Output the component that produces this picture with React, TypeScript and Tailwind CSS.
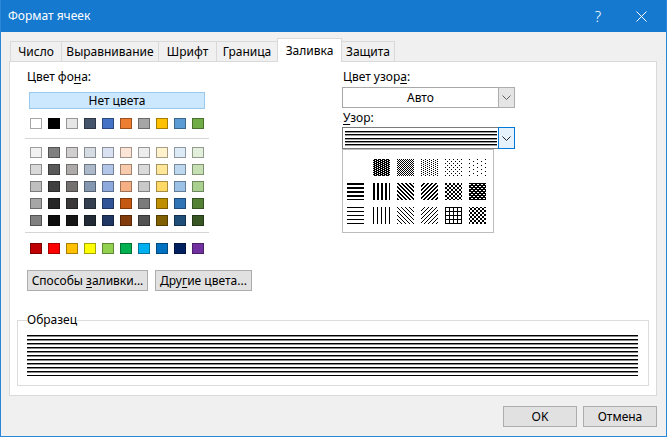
import React from "react";

const theme = [
  "bg-[#FFFFFF]", "bg-[#000000]", "bg-[#E7E6E6]", "bg-[#44546A]", "bg-[#4472C4]",
  "bg-[#ED7D31]", "bg-[#A5A5A5]", "bg-[#FFC000]", "bg-[#5B9BD5]", "bg-[#70AD47]",
];

const tints = [
  ["bg-[#F2F2F2]", "bg-[#7F7F7F]", "bg-[#D0CECE]", "bg-[#D6DCE4]", "bg-[#D9E1F2]", "bg-[#FCE4D6]", "bg-[#EDEDED]", "bg-[#FFF2CC]", "bg-[#DDEBF7]", "bg-[#E2EFDA]"],
  ["bg-[#D9D9D9]", "bg-[#595959]", "bg-[#AEAAAA]", "bg-[#ACB9CA]", "bg-[#B4C6E7]", "bg-[#F8CBAD]", "bg-[#DBDBDB]", "bg-[#FFE699]", "bg-[#BDD7EE]", "bg-[#C6E0B4]"],
  ["bg-[#BFBFBF]", "bg-[#404040]", "bg-[#757171]", "bg-[#8497B0]", "bg-[#8EA9DB]", "bg-[#F4B084]", "bg-[#C9C9C9]", "bg-[#FFD966]", "bg-[#9BC2E6]", "bg-[#A9D08E]"],
  ["bg-[#A6A6A6]", "bg-[#262626]", "bg-[#3A3838]", "bg-[#333F4F]", "bg-[#305496]", "bg-[#C65911]", "bg-[#7B7B7B]", "bg-[#BF8F00]", "bg-[#2F75B5]", "bg-[#548235]"],
  ["bg-[#808080]", "bg-[#0D0D0D]", "bg-[#171616]", "bg-[#222B35]", "bg-[#203764]", "bg-[#833C0C]", "bg-[#525252]", "bg-[#806000]", "bg-[#1F4E78]", "bg-[#375623]"],
];

const standard = [
  "bg-[#C00000]", "bg-[#FF0000]", "bg-[#FFC000]", "bg-[#FFFF00]", "bg-[#92D050]",
  "bg-[#00B050]", "bg-[#00B0F0]", "bg-[#0070C0]", "bg-[#002060]", "bg-[#7030A0]",
];

function SwatchRow({ colors, className = "" }: { colors: string[]; className?: string }) {
  return (
    <div className={`flex gap-[6px] ${className}`}>
      {colors.map((c, i) => (
        <div key={i} className={`w-[12px] h-[11px] border border-black/35 ${c}`} />
      ))}
    </div>
  );
}

type Pat = { w: number; h: number; bg: string; fg: string; r: number[][] } | null;
const B = "#000";
const W = "#fff";
const pats: Pat[] = [
  null,
  { w: 4, h: 2, bg: B, fg: W, r: [[0, 0, 1, 1], [2, 1, 1, 1]] },
  { w: 2, h: 2, bg: W, fg: B, r: [[0, 0, 1, 1], [1, 1, 1, 1]] },
  { w: 4, h: 2, bg: W, fg: B, r: [[0, 0, 1, 1], [2, 1, 1, 1]] },
  { w: 4, h: 4, bg: W, fg: B, r: [[0, 0, 1, 1], [2, 2, 1, 1]] },
  { w: 8, h: 4, bg: W, fg: B, r: [[0, 0, 1, 1], [4, 2, 1, 1]] },
  { w: 1, h: 4, bg: W, fg: B, r: [[0, 0, 1, 2]] },
  { w: 4, h: 1, bg: W, fg: B, r: [[0, 0, 2, 1]] },
  { w: 4, h: 4, bg: W, fg: B, r: [[0, 0, 2, 1], [1, 1, 2, 1], [2, 2, 2, 1], [3, 3, 1, 1], [0, 3, 1, 1]] },
  { w: 4, h: 4, bg: W, fg: B, r: [[2, 0, 2, 1], [1, 1, 2, 1], [0, 2, 2, 1], [3, 3, 1, 1], [0, 3, 1, 1]] },
  { w: 4, h: 4, bg: W, fg: B, r: [[0, 0, 2, 2], [2, 2, 2, 2]] },
  { w: 4, h: 4, bg: B, fg: W, r: [[0, 1, 2, 1], [2, 3, 2, 1]] },
  { w: 1, h: 4, bg: W, fg: B, r: [[0, 0, 1, 1]] },
  { w: 4, h: 1, bg: W, fg: B, r: [[0, 0, 1, 1]] },
  { w: 4, h: 4, bg: W, fg: B, r: [[0, 0, 1, 1], [1, 1, 1, 1], [2, 2, 1, 1], [3, 3, 1, 1]] },
  { w: 4, h: 4, bg: W, fg: B, r: [[3, 0, 1, 1], [2, 1, 1, 1], [1, 2, 1, 1], [0, 3, 1, 1]] },
  { w: 4, h: 4, bg: W, fg: B, r: [[0, 0, 4, 1], [0, 0, 1, 4]] },
  { w: 4, h: 4, bg: W, fg: B, r: [[0, 0, 1, 1], [1, 1, 1, 1], [2, 2, 1, 1], [3, 3, 1, 1], [3, 0, 1, 1], [2, 1, 1, 1], [1, 2, 1, 1], [0, 3, 1, 1]] },
];

function PatternCell({ p, id }: { p: Pat; id: string }) {
  if (!p) return <div className="w-[17px] h-[17px]" />;
  return (
    <svg width="17" height="17" shapeRendering="crispEdges" className="block">
      <defs>
        <pattern id={id} width={p.w} height={p.h} patternUnits="userSpaceOnUse">
          <rect width={p.w} height={p.h} fill={p.bg} />
          {p.r.map((r, i) => (
            <rect key={i} x={r[0]} y={r[1]} width={r[2]} height={r[3]} fill={p.fg} />
          ))}
        </pattern>
      </defs>
      <rect width="17" height="17" fill={`url(#${id})`} />
    </svg>
  );
}

function Chevron({ color = "#444" }: { color?: string }) {
  return (
    <svg width="9" height="5" viewBox="0 0 9 5" className="block">
      <path d="M0.5 0.5 L4.5 4.5 L8.5 0.5" fill="none" stroke={color} strokeWidth="1" />
    </svg>
  );
}

const tabs: { label: string; w: string; active?: boolean }[] = [
  { label: "Число", w: "w-[52px]" },
  { label: "Выравнивание", w: "w-[98px]" },
  { label: "Шрифт", w: "w-[59px]" },
  { label: "Граница", w: "w-[62px]" },
  { label: "Заливка", w: "w-[65px]", active: true },
  { label: "Защита", w: "w-[54px]" },
];

export default function App() {
  return (
    <div className="w-[667px] h-[437px] flex flex-col bg-[#f0f0f0] border-x border-b border-[#2a86d9] font-['Noto_Sans',sans-serif] text-[12px] leading-[16px] text-black overflow-hidden">
      {/* Title bar */}
      <div className="h-[32px] shrink-0 flex items-center bg-[#1479cf] text-white pl-[7px] pr-[19px]">
        <span>Формат ячеек</span>
        <span className="ml-auto w-[20px] text-center text-[15px] font-light">?</span>
        <span className="ml-[28px]">
          <svg width="11" height="11" viewBox="0 0 11 11" className="block">
            <path d="M0.5 0.5 L10.5 10.5 M10.5 0.5 L0.5 10.5" stroke="white" strokeWidth="1" />
          </svg>
        </span>
      </div>

      <div className="flex-1 flex flex-col pl-[8px] pr-[9px]">
        {/* Tabs */}
        <div className="h-[23px] mt-[6px] flex items-end pl-[1px]">
          {tabs.map((t, i) =>
            t.active ? (
              <div
                key={t.label}
                className={`${t.w} h-[24px] -mb-px relative z-10 bg-white border-x border-t border-[#d9d9d9] flex items-center justify-center ${i > 0 ? "-ml-px" : ""}`}
              >
                {t.label}
              </div>
            ) : (
              <div
                key={t.label}
                className={`${t.w} h-[20px] bg-[#f0f0f0] border-x border-t border-[#d9d9d9] flex items-center justify-center ${i > 0 ? "-ml-px" : ""}`}
              >
                {t.label}
              </div>
            )
          )}
        </div>

        {/* Panel */}
        <div className="h-[335px] bg-white border border-[#d9d9d9] flex flex-col">
          <div className="flex pt-[7px] pl-[17px]">
            {/* Left column */}
            <div className="w-[315px] flex flex-col">
              <div className="h-[16px]">
                Цвет фо<span className="underline underline-offset-2">н</span>а:
              </div>
              <div className="mt-[7px] ml-[2px] w-[176px] h-[17px] bg-[#cce8ff] border border-[#99c9ef] flex items-center justify-center">
                Нет цвета
              </div>
              <SwatchRow colors={theme} className="mt-[9px] ml-[3px]" />
              <div className="mt-[9px] -ml-[2px] w-[184px] h-px bg-[#d5d5d5]" />
              <div className="mt-[8px] ml-[3px] flex flex-col gap-[6px]">
                {tints.map((row, i) => (
                  <SwatchRow key={i} colors={row} />
                ))}
              </div>
              <div className="mt-[6px] -ml-[2px] w-[184px] h-px bg-[#d5d5d5]" />
              <SwatchRow colors={standard} className="mt-[10px] ml-[3px]" />
              <div className="mt-[16px] flex gap-[7px]">
                <div className="w-[121px] h-[21px] bg-[#e1e1e1] border border-[#adadad] flex items-center justify-center">
                  <span>
                    Способы <span className="underline underline-offset-2">з</span>аливки...
                  </span>
                </div>
                <div className="w-[97px] h-[21px] bg-[#e1e1e1] border border-[#adadad] flex items-center justify-center">
                  <span>
                    Дру<span className="underline underline-offset-2">г</span>ие цвета...
                  </span>
                </div>
              </div>
            </div>

            {/* Right column */}
            <div className="w-[173px] flex flex-col">
              <div className="h-[16px] pl-[1px]">
                Цвет узор<span className="underline underline-offset-2">а</span>:
              </div>
              <div className="mt-[2px] h-[21px] bg-white border border-[#a8a8a8] flex">
                <div className="flex-1 flex items-center justify-center">Авто</div>
                <div className="w-[17px] -my-px -mr-px bg-[#e5e5e5] border border-[#adadad] flex items-center justify-center">
                  <Chevron color="#606060" />
                </div>
              </div>
              <div className="mt-[2px] h-[16px] pl-[1px]">
                <span className="underline underline-offset-2">У</span>зор:
              </div>
              <div className="relative mt-[1px]">
                <div className="h-[22px] bg-white border border-[#7a7a7a] flex">
                  <div className="flex-1 pl-[2px] pt-[3px]">
                    <svg width="152" height="15" shapeRendering="crispEdges" className="block">
                      {[0, 3, 7, 10, 13].map((y) => (
                        <g key={y}>
                          <rect x="0" y={y} width="152" height="1" fill="#000" />
                          <rect x="0" y={y + 1} width="152" height="1" fill="#9a9a9a" />
                        </g>
                      ))}
                    </svg>
                  </div>
                  <div className="w-[17px] -my-px -mr-px bg-[#e5f1fb] border border-[#0078d7] flex items-center justify-center">
                    <Chevron color="#222" />
                  </div>
                </div>
                {/* Open pattern list */}
                <div className="absolute left-0 top-full w-[152px] h-[84px] bg-white border border-[#bcbcbc] pl-[4px] pt-[9px] grid grid-cols-[19px_17px_17px_17px_17px_17px] gap-x-[7px] gap-y-[7px] content-start">
                  {pats.map((p, i) => (
                    <PatternCell key={i} p={p} id={`pat${i}`} />
                  ))}
                </div>
              </div>
            </div>
          </div>

          {/* Sample */}
          <fieldset className="mt-[21px] mx-[7px] border border-[#dcdcdc] pl-[9px] pt-[7px] pb-[9px]">
            <legend className="leading-[16px]">Образец</legend>
            <svg width="611" height="41" shapeRendering="crispEdges" className="block">
              {Array.from({ length: 11 }).map((_, i) => (
                <g key={i}>
                  <rect x="0" y={i * 4} width="611" height="1" fill="#000" />
                  {i < 10 && <rect x="0" y={i * 4 + 1} width="611" height="1" fill="#8a8a8a" />}
                </g>
              ))}
            </svg>
          </fieldset>
        </div>

        {/* Buttons */}
        <div className="flex justify-end gap-[6px] mt-[10px]">
          <div className="w-[74px] h-[21px] bg-[#e1e1e1] border border-[#adadad] flex items-center justify-center">
            OK
          </div>
          <div className="w-[74px] h-[21px] bg-[#e1e1e1] border border-[#adadad] flex items-center justify-center">
            Отмена
          </div>
        </div>
      </div>
    </div>
  );
}
